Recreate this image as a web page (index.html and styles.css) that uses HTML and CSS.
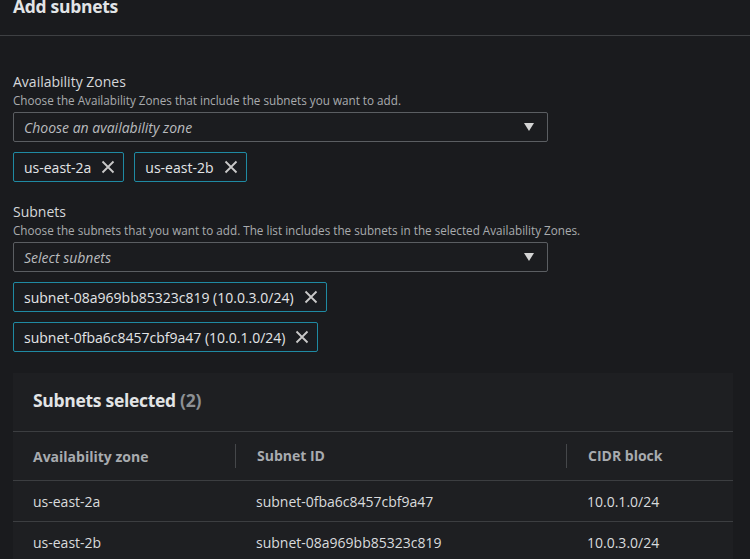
FILE: index.html
```html
<!DOCTYPE html>
<html>
<head>
<meta charset="utf-8">
<link rel="stylesheet" href="styles.css">
</head>
<body>
<header class="page-header">
  <h1 class="title">Add subnets</h1>
</header>
<main class="content">
  <section class="field">
    <div class="label">Availability Zones</div>
    <div class="desc">Choose the Availability Zones that include the subnets you want to add.</div>
    <div class="select">
      <span class="placeholder">Choose an availability zone</span>
      <svg class="caret" width="12" height="10" viewBox="0 0 12 10"><path d="M1 1 L11 1 L6 9 Z" fill="#d4d4d4"/></svg>
    </div>
    <div class="tokens">
      <div class="token"><span>us-east-2a</span><svg class="x" width="14" height="14" viewBox="0 0 14 14"><path d="M1.5 1.5 L12.5 12.5 M12.5 1.5 L1.5 12.5" stroke="#c9c9c9" stroke-width="1.8" fill="none"/></svg></div>
      <div class="token"><span>us-east-2b</span><svg class="x" width="14" height="14" viewBox="0 0 14 14"><path d="M1.5 1.5 L12.5 12.5 M12.5 1.5 L1.5 12.5" stroke="#c9c9c9" stroke-width="1.8" fill="none"/></svg></div>
    </div>
  </section>
  <section class="field second">
    <div class="label">Subnets</div>
    <div class="desc">Choose the subnets that you want to add. The list includes the subnets in the selected Availability Zones.</div>
    <div class="select">
      <span class="placeholder">Select subnets</span>
      <svg class="caret" width="12" height="10" viewBox="0 0 12 10"><path d="M1 1 L11 1 L6 9 Z" fill="#d4d4d4"/></svg>
    </div>
    <div class="tokens column">
      <div class="token"><span>subnet-08a969bb85323c819 (10.0.3.0/24)</span><svg class="x" width="14" height="14" viewBox="0 0 14 14"><path d="M1.5 1.5 L12.5 12.5 M12.5 1.5 L1.5 12.5" stroke="#c9c9c9" stroke-width="1.8" fill="none"/></svg></div>
      <div class="token"><span>subnet-0fba6c8457cbf9a47 (10.0.1.0/24)</span><svg class="x" width="14" height="14" viewBox="0 0 14 14"><path d="M1.5 1.5 L12.5 12.5 M12.5 1.5 L1.5 12.5" stroke="#c9c9c9" stroke-width="1.8" fill="none"/></svg></div>
    </div>
  </section>
  <section class="card">
    <h2 class="card-title">Subnets selected <span class="count">(2)</span></h2>
    <div class="table">
      <div class="row head">
        <div class="cell">Availability zone</div>
        <div class="cell sep">Subnet ID</div>
        <div class="cell sep">CIDR block</div>
      </div>
      <div class="row">
        <div class="cell">us-east-2a</div>
        <div class="cell">subnet-0fba6c8457cbf9a47</div>
        <div class="cell">10.0.1.0/24</div>
      </div>
      <div class="row">
        <div class="cell">us-east-2b</div>
        <div class="cell">subnet-08a969bb85323c819</div>
        <div class="cell">10.0.3.0/24</div>
      </div>
    </div>
  </section>
</main>
</body>
</html>
```

FILE: styles.css
```css
html, body {
  margin: 0;
  padding: 0;
  background: #1a1b1e;
  color: #d5d7da;
  font-family: "Open Sans", "Noto Sans", sans-serif;
  overflow: hidden;
  height: 559px;
}
.page-header {
  height: 36px;
  border-bottom: 1px solid #3e4043;
  padding: 0 13px;
  box-sizing: border-box;
  overflow: hidden;
}
.title {
  margin: -6px 0 0 0;
  font-size: 17.5px;
  letter-spacing: -0.3px;
  line-height: 24px;
  font-weight: 700;
  color: #e2e4e6;
}
.content {
  padding: 36px 13px 0 13px;
}
.field {
  width: 535px;
}
.field.second {
  margin-top: 20px;
}
.label {
  font-size: 14px;
  line-height: 20px;
  color: #d5d7da;
}
.desc {
  font-size: 11.7px;
  line-height: 16px;
  color: #a9abae;
  white-space: nowrap;
}
.select {
  margin-top: 4px;
  height: 30px;
  box-sizing: border-box;
  border: 1px solid #5b5e62;
  border-radius: 2px;
  background: #1b1c1f;
  display: flex;
  align-items: center;
  justify-content: space-between;
  padding: 0 12px 0 10px;
}
.placeholder {
  font-style: italic;
  font-size: 14px;
  color: #b9bbbe;
}
.caret {
  display: block;
}
.tokens {
  display: flex;
  gap: 10px;
  margin-top: 10px;
}
.tokens.column {
  flex-direction: column;
  align-items: flex-start;
  gap: 10px;
}
.token {
  height: 30px;
  box-sizing: border-box;
  border: 1px solid #1f8aa3;
  border-radius: 2px;
  background: #1a1c20;
  display: flex;
  align-items: center;
  gap: 10px;
  padding: 0 8px 0 10px;
  font-size: 14px;
  color: #e3e5e7;
}
.x {
  display: block;
}
.card {
  margin-top: 21px;
  width: 720px;
  background: #1e1f22;
  padding-top: 13px;
}
.card-title {
  margin: 0;
  padding: 0 20px 17px 20px;
  font-size: 17.5px;
  letter-spacing: -0.3px;
  line-height: 28px;
  font-weight: 700;
  color: #e2e4e6;
  border-bottom: 1px solid #3c3e41;
}
.count {
  color: #8d9094;
}
.row {
  display: grid;
  grid-template-columns: 222px 331px 167px;
  height: 40px;
  align-items: center;
  border-bottom: 1px solid #3c3e41;
  font-size: 14px;
  color: #d9dbdd;
}
.row.head {
  height: 48px;
  font-weight: 700;
  color: #a8abaf;
}
.cell {
  padding-left: 20px;
  box-sizing: border-box;
  white-space: nowrap;
}
.row .cell + .cell {
  padding-left: 21px;
}
.cell.sep {
  border-left: 1px solid #45474a;
  line-height: 24px;
}
```
